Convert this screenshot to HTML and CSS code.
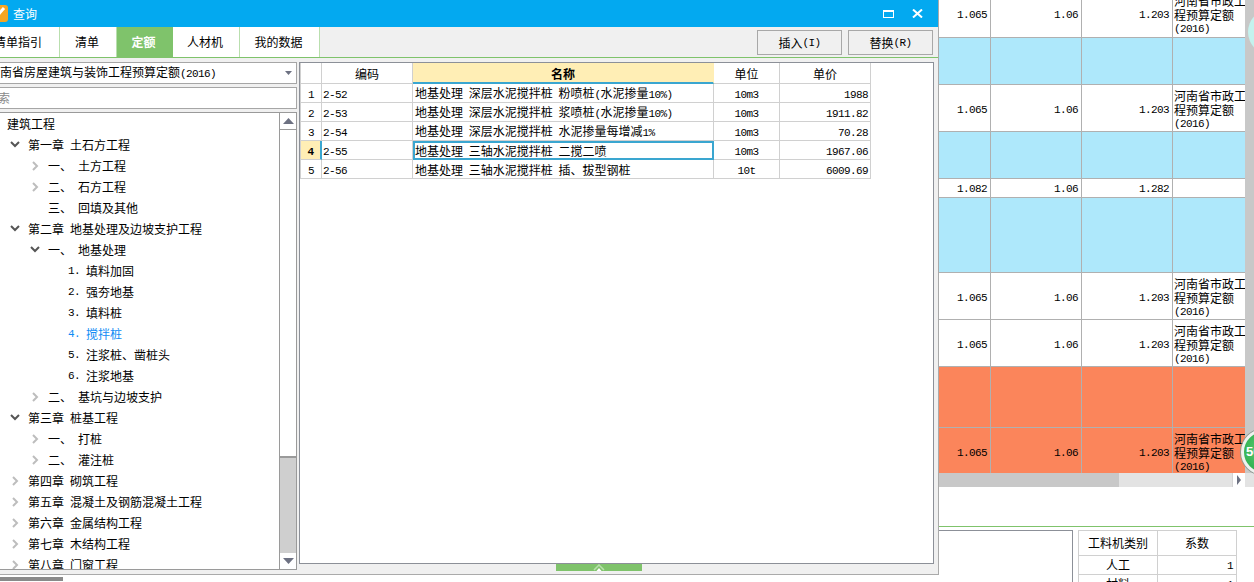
FILE: index.html
```html
<!DOCTYPE html>
<html lang="zh">
<head>
<meta charset="utf-8">
<title>查询</title>
<link rel="stylesheet" href="styles.css">
</head>
<body>
<div class="app">
  <div class="under"><div class="under-tab"></div></div>
  <div class="bg">
    <div class="sheet">
      <div class="grid">
        <div class="srow h48"><div class="c c1"><span class="lat">1.065</span></div><div class="c c2"><span class="lat">1.06</span></div><div class="c c3"><span class="lat">1.203</span></div><div class="c c4">河南省市政工<br>程预算定额<br><span class="lat">(2016)</span></div></div>
        <div class="srow h47 blue"><div class="c c1"></div><div class="c c2"></div><div class="c c3"></div><div class="c c4"></div></div>
        <div class="srow h47"><div class="c c1"><span class="lat">1.065</span></div><div class="c c2"><span class="lat">1.06</span></div><div class="c c3"><span class="lat">1.203</span></div><div class="c c4">河南省市政工<br>程预算定额<br><span class="lat">(2016)</span></div></div>
        <div class="srow h47 blue"><div class="c c1"></div><div class="c c2"></div><div class="c c3"></div><div class="c c4"></div></div>
        <div class="srow h19"><div class="c c1"><span class="lat">1.082</span></div><div class="c c2"><span class="lat">1.06</span></div><div class="c c3"><span class="lat">1.282</span></div><div class="c c4"></div></div>
        <div class="srow h75 blue"><div class="c c1"></div><div class="c c2"></div><div class="c c3"></div><div class="c c4"></div></div>
        <div class="srow h47"><div class="c c1"><span class="lat">1.065</span></div><div class="c c2"><span class="lat">1.06</span></div><div class="c c3"><span class="lat">1.203</span></div><div class="c c4">河南省市政工<br>程预算定额<br><span class="lat">(2016)</span></div></div>
        <div class="srow h47"><div class="c c1"><span class="lat">1.065</span></div><div class="c c2"><span class="lat">1.06</span></div><div class="c c3"><span class="lat">1.203</span></div><div class="c c4">河南省市政工<br>程预算定额<br><span class="lat">(2016)</span></div></div>
        <div class="srow h61 orange"><div class="c c1"></div><div class="c c2"></div><div class="c c3"></div><div class="c c4"></div></div>
        <div class="srow h46 orange"><div class="c c1"><span class="lat">1.065</span></div><div class="c c2"><span class="lat">1.06</span></div><div class="c c3"><span class="lat">1.203</span></div><div class="c c4">河南省市政工<br>程预算定额<br><span class="lat">(2016)</span></div></div>
      </div>
      <div class="gutter"></div>
    </div>
    <div class="hscroll">
      <div class="hthumb"></div>
      <div class="hbtn"><svg width="6" height="10" viewBox="0 0 6 10"><path class="arrow" d="M1 0 L5 5 L1 10 Z"/></svg></div>
    </div>
    <div class="lower">
      <div class="lower-box"></div>
      <table class="coef">
        <tr class="coef-head"><td>工料机类别</td><td>系数</td></tr>
        <tr><td>人工</td><td class="right"><span class="lat">1</span></td></tr>
        <tr><td>材料</td><td class="right"><span class="lat">1</span></td></tr>
      </table>
    </div>
  </div>

  <div class="orb orb-pale"></div>
  <div class="orb orb-green"><span class="orb-text">50</span></div>

  <section class="dialog">
    <header class="title">
      <svg class="logo" width="17" height="17" viewBox="0 0 17 17"><rect width="17" height="17" rx="3" fill="#f6a623"/><path d="M4 13 L13 3" stroke="#fff" stroke-width="3"/><path d="M3 9 L8 14" stroke="#fff" stroke-width="1.5"/></svg>
      <span class="title-text">查询</span>
      <div class="win-btns">
        <svg width="11" height="8" viewBox="0 0 11 8"><rect x="0.5" y="1" width="10" height="6.5" fill="none" stroke="#fff"/><rect width="11" height="2" fill="#fff"/></svg>
        <svg width="11" height="9" viewBox="0 0 11 9"><path d="M1 0.5 L10 8.5 M10 0.5 L1 8.5" stroke="#fff" stroke-width="2"/></svg>
      </div>
    </header>
    <nav class="tabs">
      <div class="tab t1">清单指引</div>
      <div class="tab t2">清单</div>
      <div class="tab t3 active">定额</div>
      <div class="tab t4">人材机</div>
      <div class="tab t5">我的数据</div>
      <div class="actions">
        <div class="btn">插入<span class="lat">(I)</span></div>
        <div class="btn btn-b">替换<span class="lat">(R)</span></div>
      </div>
    </nav>
    <div class="body">
      <aside class="left">
        <div class="combo"><span>河南省房屋建筑与装饰工程预算定额<span class="lat">(2016)</span></span>
          <svg width="7" height="4" viewBox="0 0 7 4"><path class="arrow" d="M0 0 H7 L3.5 4 Z"/></svg>
        </div>
        <div class="search">搜索</div>
        <div class="tree">
          <ul class="list">
            <li class="node l0">建筑工程</li>
            <li class="node l1"><svg class="ico" width="10" height="7" viewBox="0 0 10 7"><path class="down" d="M1 1 L5 5 L9 1"/></svg><span>第一章</span><span class="sp">土石方工程</span></li>
            <li class="node l2"><svg class="ico" width="7" height="10" viewBox="0 0 7 10"><path class="rgt" d="M1.5 1 L5.5 5 L1.5 9"/></svg><span class="cn">一、</span><span class="sp">土方工程</span></li>
            <li class="node l2"><svg class="ico" width="7" height="10" viewBox="0 0 7 10"><path class="rgt" d="M1.5 1 L5.5 5 L1.5 9"/></svg><span class="cn">二、</span><span class="sp">石方工程</span></li>
            <li class="node l2 bare"><span class="cn">三、</span><span class="sp">回填及其他</span></li>
            <li class="node l1"><svg class="ico" width="10" height="7" viewBox="0 0 10 7"><path class="down" d="M1 1 L5 5 L9 1"/></svg><span>第二章</span><span class="sp">地基处理及边坡支护工程</span></li>
            <li class="node l2"><svg class="ico" width="10" height="7" viewBox="0 0 10 7"><path class="down" d="M1 1 L5 5 L9 1"/></svg><span class="cn">一、</span><span class="sp">地基处理</span></li>
            <li class="node l3"><span class="no lat">1.</span><span>填料加固</span></li>
            <li class="node l3"><span class="no lat">2.</span><span>强夯地基</span></li>
            <li class="node l3"><span class="no lat">3.</span><span>填料桩</span></li>
            <li class="node l3 current"><span class="no lat">4.</span><span>搅拌桩</span></li>
            <li class="node l3"><span class="no lat">5.</span><span>注浆桩、凿桩头</span></li>
            <li class="node l3"><span class="no lat">6.</span><span>注浆地基</span></li>
            <li class="node l2"><svg class="ico" width="7" height="10" viewBox="0 0 7 10"><path class="rgt" d="M1.5 1 L5.5 5 L1.5 9"/></svg><span class="cn">二、</span><span class="sp">基坑与边坡支护</span></li>
            <li class="node l1"><svg class="ico" width="10" height="7" viewBox="0 0 10 7"><path class="down" d="M1 1 L5 5 L9 1"/></svg><span>第三章</span><span class="sp">桩基工程</span></li>
            <li class="node l2"><svg class="ico" width="7" height="10" viewBox="0 0 7 10"><path class="rgt" d="M1.5 1 L5.5 5 L1.5 9"/></svg><span class="cn">一、</span><span class="sp">打桩</span></li>
            <li class="node l2"><svg class="ico" width="7" height="10" viewBox="0 0 7 10"><path class="rgt" d="M1.5 1 L5.5 5 L1.5 9"/></svg><span class="cn">二、</span><span class="sp">灌注桩</span></li>
            <li class="node l1"><svg class="ico" width="7" height="10" viewBox="0 0 7 10"><path class="rgt" d="M1.5 1 L5.5 5 L1.5 9"/></svg><span>第四章</span><span class="sp">砌筑工程</span></li>
            <li class="node l1"><svg class="ico" width="7" height="10" viewBox="0 0 7 10"><path class="rgt" d="M1.5 1 L5.5 5 L1.5 9"/></svg><span>第五章</span><span class="sp">混凝土及钢筋混凝土工程</span></li>
            <li class="node l1"><svg class="ico" width="7" height="10" viewBox="0 0 7 10"><path class="rgt" d="M1.5 1 L5.5 5 L1.5 9"/></svg><span>第六章</span><span class="sp">金属结构工程</span></li>
            <li class="node l1"><svg class="ico" width="7" height="10" viewBox="0 0 7 10"><path class="rgt" d="M1.5 1 L5.5 5 L1.5 9"/></svg><span>第七章</span><span class="sp">木结构工程</span></li>
            <li class="node l1"><svg class="ico" width="7" height="10" viewBox="0 0 7 10"><path class="rgt" d="M1.5 1 L5.5 5 L1.5 9"/></svg><span>第八章</span><span class="sp">门窗工程</span></li>
          </ul>
          <div class="vscroll">
            <div class="vbtn"><svg width="11" height="6" viewBox="0 0 11 6"><path class="arrow" d="M5.5 0 L11 6 H0 Z"/></svg></div>
            <div class="vthumb"></div>
            <div class="vtrack"></div>
            <div class="vbtn vbtn-b"><svg width="11" height="6" viewBox="0 0 11 6"><path class="arrow" d="M0 0 H11 L5.5 6 Z"/></svg></div>
          </div>
        </div>
      </aside>
      <main class="right-pane">
        <div class="panel">
          <table class="quota">
            <colgroup><col class="w0"><col class="w1"><col class="w2"><col class="w3"><col class="w4"></colgroup>
            <thead>
              <tr><th class="rh"></th><th>编码</th><th class="sel-col">名称</th><th>单位</th><th>单价</th></tr>
            </thead>
            <tbody>
              <tr><td class="rh"><span class="lat">1</span></td><td class="code"><span class="lat">2-52</span></td><td class="name">地基处理 深层水泥搅拌桩 粉喷桩<span class="lat">(</span>水泥掺量<span class="lat">10%)</span></td><td class="unit"><span class="lat">10m3</span></td><td class="price"><span class="lat">1988</span></td></tr>
              <tr><td class="rh"><span class="lat">2</span></td><td class="code"><span class="lat">2-53</span></td><td class="name">地基处理 深层水泥搅拌桩 浆喷桩<span class="lat">(</span>水泥掺量<span class="lat">10%)</span></td><td class="unit"><span class="lat">10m3</span></td><td class="price"><span class="lat">1911.82</span></td></tr>
              <tr><td class="rh"><span class="lat">3</span></td><td class="code"><span class="lat">2-54</span></td><td class="name">地基处理 深层水泥搅拌桩 水泥掺量每增减<span class="lat">1%</span></td><td class="unit"><span class="lat">10m3</span></td><td class="price"><span class="lat">70.28</span></td></tr>
              <tr class="sel-row"><td class="rh"><span class="lat">4</span></td><td class="code"><span class="lat">2-55</span></td><td class="name">地基处理 三轴水泥搅拌桩 二搅二喷</td><td class="unit"><span class="lat">10m3</span></td><td class="price"><span class="lat">1967.06</span></td></tr>
              <tr><td class="rh"><span class="lat">5</span></td><td class="code"><span class="lat">2-56</span></td><td class="name">地基处理 三轴水泥搅拌桩 插、拔型钢桩</td><td class="unit"><span class="lat">10t</span></td><td class="price"><span class="lat">6009.69</span></td></tr>
            </tbody>
          </table>
        </div>
        <div class="grip"><svg width="12" height="7" viewBox="0 0 12 7"><path d="M1 6 L6 1 L11 6" fill="none" stroke="#b9e0ad" stroke-width="1.5"/><path d="M3.5 7 L6 4 L8.5 7 Z" fill="#fff"/></svg></div>
      </main>
    </div>
  </section>
</div>
</body>
</html>
```

FILE: styles.css
```css
* { box-sizing: border-box; }
html, body { margin: 0; padding: 0; background: #fff; }
body {
  width: 1254px;
  height: 582px;
  overflow: hidden;
  font-family: "Noto Sans CJK SC", "Liberation Sans", sans-serif;
  font-size: 12px;
  line-height: 14px;
  color: #000;
}
.lat { font-family: "Liberation Mono", "DejaVu Sans Mono", monospace; font-size: 11px; letter-spacing: -0.6px; }
.arrow { fill: #6d7182; }

.app { position: relative; display: flex; width: 1254px; height: 582px; overflow: hidden; }

/* Underlying application */
.under { width: 939px; flex: none; display: flex; flex-direction: column; justify-content: flex-end; padding-bottom: 1px; }
.under-tab { width: 63px; height: 4px; background: #8a8a8a; }

.bg { flex: none; width: 315px; display: flex; flex-direction: column; height: 582px; }
.sheet { display: flex; height: 473px; flex: none; overflow: hidden; }
.grid { width: 306px; flex: none; margin-top: -10px; }
.gutter { flex: 1; background: #c8c8c8; }
.srow { display: grid; grid-template-columns: 52px 91px 91px 72px; background: #fff; }
.h48 { height: 48px; } .h47 { height: 47px; } .h19 { height: 19px; }
.h75 { height: 75px; } .h61 { height: 61px; } .h46 { height: 46px; }
.blue { background: #aee8fb; }
.orange { background: #fb855b; }
.c {
  display: flex;
  align-items: center;
  justify-content: flex-end;
  padding: 4px 3px 0 0;
  border-right: 1px solid #b0b0b0;
  border-bottom: 1px solid #b0b0b0;
}
.h48 .c, .h19 .c { padding-top: 2px; }
.h19 .c { padding-top: 1px; }
.c4, .h48 .c4 {
  display: block;
  border-right: 0;
  padding: 4px 0 0 1px;
  white-space: nowrap;
  overflow: hidden;
  line-height: 13.5px;
}
.c4 .lat { vertical-align: 1px; }
.h19 .c4, .blue .c4 { padding: 0; }

.hscroll { height: 14px; flex: none; background: #e3e3e3; display: flex; justify-content: space-between; }
.hthumb { width: 180px; background: #c8c8c8; }
.hbtn { width: 13px; margin-right: 9px; background: #fff; border-left: 1px solid #d4d4d4; display: flex; align-items: center; justify-content: center; }

.lower { margin-top: 39px; border-top: 1px solid #7fc36b; padding-top: 3px; display: flex; gap: 5px; flex: 1; }
.lower-box { width: 134px; border-top: 1px solid #8c9098; border-right: 1px solid #8c9098; }
.coef { border-collapse: collapse; table-layout: fixed; width: 159px; height: 25px; }
.coef td { width: 79px; height: 19px; padding: 0 3px; border: 1px solid #d0d0d0; text-align: center; }
.coef .coef-head td { height: 25px; }
.coef td.right { text-align: right; }

.orb { position: absolute; border-radius: 50%; }
.orb-pale { left: 1248px; top: 9px; width: 46px; height: 46px; background: #c4f2ee; }
.orb-green {
  left: 1241px; top: 429px; width: 46px; height: 46px;
  background: radial-gradient(circle at 50% 45%, #5fd07a 0, #36b354 70%);
  border: 3px solid #eef2ef;
  box-shadow: 0 0 0 1px #8f9a93;
  color: #fff;
  font-family: "Liberation Sans", sans-serif;
  font-weight: 700;
  font-size: 13px;
  line-height: 40px;
  padding-left: 2px;
}

/* Dialog */
.dialog {
  position: absolute;
  left: 0; top: 0;
  width: 939px; height: 575px;
  display: flex;
  flex-direction: column;
  background: #f0f0f0;
  border-right: 1px solid #aaa;
  border-bottom: 1px solid #aaa;
  overflow: hidden;
}
.title { height: 27px; flex: none; background: #03a9f0; color: #fff; display: flex; align-items: center; }
.logo { margin: -1px 0 0 -9px; }
.title-text { margin-left: 5px; }
.win-btns { margin-left: auto; margin-right: 15px; display: flex; align-items: center; gap: 18px; }

.tabs { height: 31px; flex: none; display: flex; margin-left: -21px; border-bottom: 1px solid #7fc36b; }
.tab { background: #fff; border-right: 1px solid #b9dfae; display: flex; align-items: center; justify-content: center; padding-right: 2px; }
.t1 { width: 81px; } .t2 { width: 57px; } .t3 { width: 56px; } .t4 { width: 67px; } .t5 { width: 80px; }
.tab.active { background: #7fc36b; color: #fff; font-weight: 700; border-right-color: #7fc36b; }
.actions { margin-left: auto; display: flex; gap: 6px; padding: 3px 5px 0 0; }
.btn { width: 85px; height: 25px; border: 1px solid #a8a8a8; display: flex; align-items: center; justify-content: center; }

.body { flex: 1; display: flex; padding: 4px 4px 4px 0; min-height: 0; }
.left { width: 317px; margin-left: -20px; flex: none; display: flex; flex-direction: column; gap: 3px; }
.combo, .search { height: 22px; flex: none; border: 1px solid #a6a6a6; background: #fff; display: flex; align-items: center; }
.combo { padding: 0 4px 0 7px; justify-content: space-between; }
.search { padding-left: 5px; color: #8a8a8a; }
.tree { flex: 1; min-height: 0; display: flex; background: #fff; border: 1px solid #9a9a9a; }
.list { flex: 1; margin: 0; padding: 0 0 0 19px; list-style: none; overflow: hidden; }
.node { height: 21px; display: flex; align-items: center; white-space: nowrap; }
.ico { flex: none; }
.down { fill: none; stroke: #555; stroke-width: 2; }
.rgt { fill: none; stroke: #bdbdbd; stroke-width: 2; }
.sp { margin-left: 6px; }
.l0 { padding-left: 7px; }
.l1 { padding-left: 10px; }
.l1 .ico { width: 18px; padding-right: 8px; }
.l2 { padding-left: 30px; }
.l2 .ico { width: 18px; padding-right: 8px; }
.l2.bare { padding-left: 48px; }
.l3 { padding-left: 68px; }
.cn { width: 24px; }
.no { width: 18px; }
.current { color: #0f8cf5; }

.vscroll { width: 17px; flex: none; display: flex; flex-direction: column; background: #cfcfcf; border-left: 1px solid #9a9a9a; }
.vbtn { height: 17px; flex: none; background: #fff; border-bottom: 1px solid #9a9a9a; display: flex; align-items: center; justify-content: center; }
.vbtn-b { border-bottom: 0; border-top: 1px solid #cfcfcf; }
.vthumb { height: 328px; flex: none; background: #fff; border-bottom: 2px solid #9a9a9a; }
.vtrack { flex: 1; }

.right-pane { margin-left: 2px; flex: 1; display: flex; flex-direction: column; min-width: 0; }
.panel { width: 100%; height: 502px; flex: none; background: #fff; border: 1px solid #8c9098; }
.grip { width: 86px; height: 7px; margin-left: 257px; flex: none; background: #7fc36b; display: flex; justify-content: center; }

.quota { border-collapse: separate; border-spacing: 0; table-layout: fixed; width: 571px; }
.w0 { width: 22px; } .w1 { width: 91px; } .w2 { width: 301px; } .w3 { width: 66px; } .w4 { width: 91px; }
.quota th, .quota td {
  padding: 1px 0 0;
  height: 19px;
  border-right: 1px solid #d0d0d0;
  border-bottom: 1px solid #d0d0d0;
  white-space: nowrap;
  overflow: hidden;
  font-weight: 400;
  text-align: center;
}
.quota th { height: 21px; padding-top: 2px; }
.quota .sel-col { background: #ffeeb5; font-weight: 700; border-bottom: 2px solid #3aa6d0; border-right-color: #ffeeb5; }
.quota .rh { border-left: 1px solid #d0d0d0; }
.quota .code { text-align: left; padding-left: 1px; }
.quota .name { text-align: left; padding-left: 2px; word-spacing: 3px; }
.quota .price { text-align: right; padding-right: 2px; }
.sel-row .rh { background: #ffeeb5; font-weight: 700; border-right: 2px solid #3aa6d0; }
.quota .sel-row .name { border: 2px solid #3aa6d0; padding: 0; }
```
